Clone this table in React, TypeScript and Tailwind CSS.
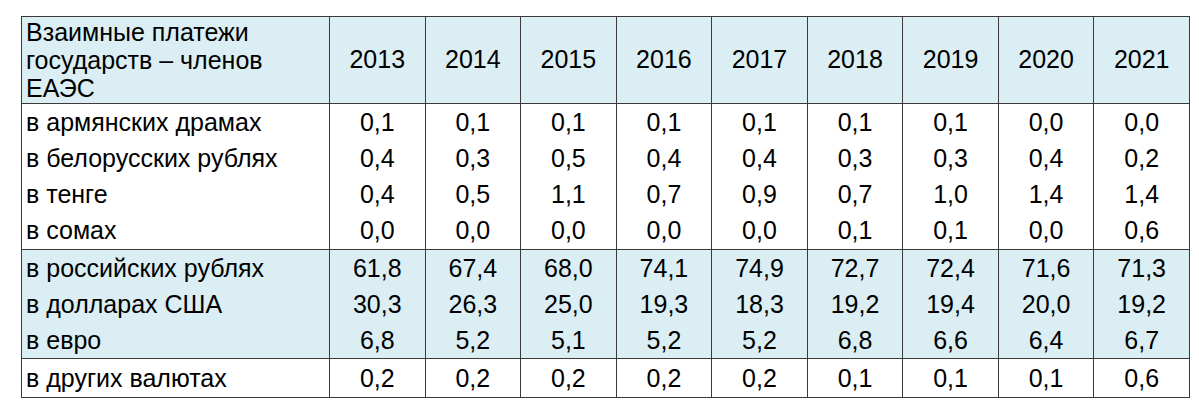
const years = ['2013', '2014', '2015', '2016', '2017', '2018', '2019', '2020', '2021'];

type Row = { label: string; values: string[]; h: string };

const groups: { bg: string; rows: Row[] }[] = [
  {
    bg: 'bg-white',
    rows: [
      { label: 'в армянских драмах', values: ['0,1', '0,1', '0,1', '0,1', '0,1', '0,1', '0,1', '0,0', '0,0'], h: 'h-[37px]' },
      { label: 'в белорусских рублях', values: ['0,4', '0,3', '0,5', '0,4', '0,4', '0,3', '0,3', '0,4', '0,2'], h: 'h-[36px]' },
      { label: 'в тенге', values: ['0,4', '0,5', '1,1', '0,7', '0,9', '0,7', '1,0', '1,4', '1,4'], h: 'h-[36px]' },
      { label: 'в сомах', values: ['0,0', '0,0', '0,0', '0,0', '0,0', '0,1', '0,1', '0,0', '0,6'], h: 'h-[37px]' },
    ],
  },
  {
    bg: 'bg-[#daeef3]',
    rows: [
      { label: 'в российских рублях', values: ['61,8', '67,4', '68,0', '74,1', '74,9', '72,7', '72,4', '71,6', '71,3'], h: 'h-[37px]' },
      { label: 'в долларах США', values: ['30,3', '26,3', '25,0', '19,3', '18,3', '19,2', '19,4', '20,0', '19,2'], h: 'h-[36px]' },
      { label: 'в евро', values: ['6,8', '5,2', '5,1', '5,2', '5,2', '6,8', '6,6', '6,4', '6,7'], h: 'h-[36px]' },
    ],
  },
  {
    bg: 'bg-white',
    rows: [
      { label: 'в других валютах', values: ['0,2', '0,2', '0,2', '0,2', '0,2', '0,1', '0,1', '0,1', '0,6'], h: 'h-[39px]' },
    ],
  },
];

export default function App() {
  return (
    <div className="min-h-[415px] w-[1199px] bg-white pl-[21px] pt-[16px] font-['Liberation_Sans',Arial,sans-serif] text-[25px] text-black">
      <table className="w-[1169px] table-fixed border-collapse">
        <colgroup>
          <col className="w-[308px]" />
          {years.map((y) => (
            <col key={y} />
          ))}
        </colgroup>
        <thead>
          <tr className="h-[87px] bg-[#daeef3]">
            <th className="border border-[#3a3a3a] px-[4px] text-left align-middle font-normal leading-[28px]">
              Взаимные платежи государств – членов ЕАЭС
            </th>
            {years.map((y) => (
              <th key={y} className="border border-[#3a3a3a] text-center font-normal">
                {y}
              </th>
            ))}
          </tr>
        </thead>
        {groups.map((g, gi) => (
          <tbody key={gi} className={`${g.bg} border-b border-[#3a3a3a]`}>
            {g.rows.map((r) => (
              <tr key={r.label} className={r.h}>
                <td className="border-x border-[#3a3a3a] px-[4px] leading-none">{r.label}</td>
                {r.values.map((v, i) => (
                  <td key={i} className="border-x border-[#3a3a3a] text-center leading-none">
                    {v}
                  </td>
                ))}
              </tr>
            ))}
          </tbody>
        ))}
      </table>
    </div>
  );
}
